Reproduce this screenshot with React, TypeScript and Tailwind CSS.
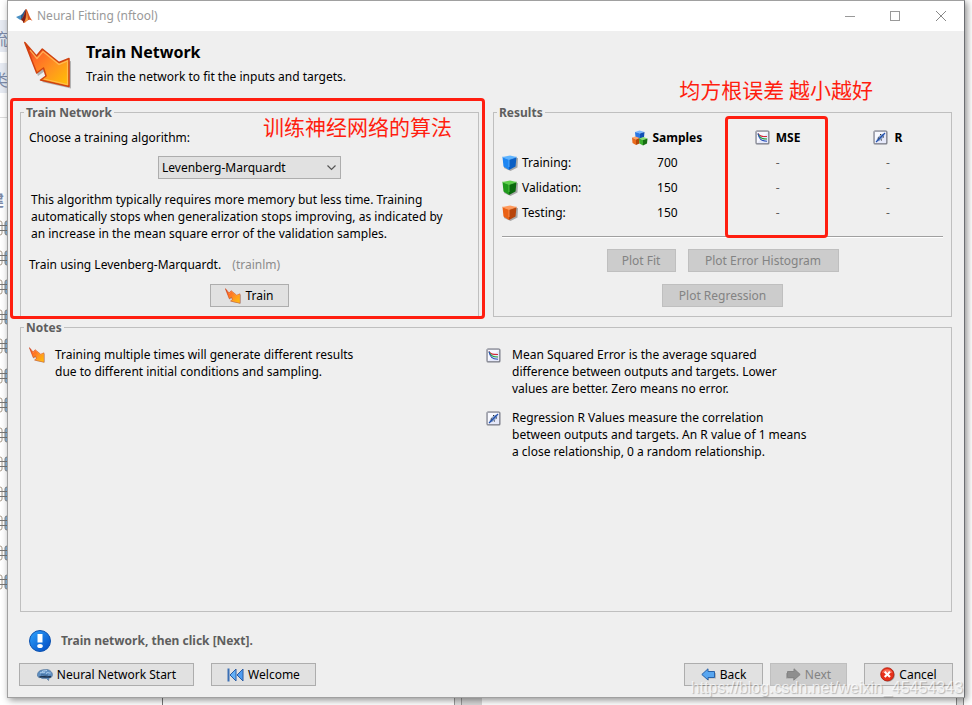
import { useState, type ReactNode } from 'react'

const ALGORITHMS = ['Levenberg-Marquardt', 'Bayesian Regularization', 'Scaled Conjugate Gradient']

const SAMPLES = [
  { id: 'training', label: 'Training:', count: 700, light: '#5fb4ff', mid: '#1e86f2', dark: '#0b5fc4' },
  { id: 'validation', label: 'Validation:', count: 150, light: '#5fd04c', mid: '#1f9a1c', dark: '#0b6a0e' },
  { id: 'testing', label: 'Testing:', count: 150, light: '#ff9a5c', mid: '#ea6216', dark: '#b8450a' },
]

const SIDEBAR_MARKS = [228, 258, 287, 317, 346, 376, 405, 435, 464, 494, 523, 553, 582]

function MatlabIcon() {
  return (
    <svg width="17" height="16" viewBox="0 0 17 16" aria-hidden="true">
      <path d="M0 9 L5 7 L7.500 8.500 L5 12 L3.500 11.500 Z" fill="#4a90c4" />
      <path d="M5 7 C7 6 8 2 10 1 L8.500 8 L5 12 Z" fill="#2d5f91" />
      <path d="M10 1 C11.500 1 13 9 16.500 13 C14.500 11.500 13 11.500 11.500 12.500 C10 13.500 9 15 7.500 15 C7 13 6.500 12 5 12 C8 9 8.500 4 10 1 Z" fill="#d9541e" />
      <path d="M10 1 C9 5 8 9 5 12 C6.500 12 7 13 7.500 15 C9.500 12 10.500 7 10 1 Z" fill="#7c1f1a" />
      <path d="M10.500 3 C11 8 10 12 8 15 C9.500 14 11 12 12 12 C11.500 9 11.500 6 10.500 3 Z" fill="#f5a04a" />
    </svg>
  )
}

function TrainArrow({ size, id }: { size: number; id: string }) {
  return (
    <svg className="shrink-0" width={size} height={size} viewBox="0 0 48 48" aria-hidden="true">
      <defs>
        <linearGradient id={id} x1="0" y1="0" x2="1" y2="1">
          <stop offset="0" stopColor="#d01c10" />
          <stop offset="0.300" stopColor="#ff6a26" />
          <stop offset="0.600" stopColor="#ff9420" />
          <stop offset="1" stopColor="#ffc400" />
        </linearGradient>
      </defs>
      <path d="M3 5 L14 17 L20 10 L36 23 L47 20 L47 47.500 L18 41 L23 37 L21 30 L14 35 Z" fill="#000" opacity="0.250" />
      <path
        d="M0.800 1.500 L12.500 15 L18.300 8 L35 21.500 L45 17.500 L45 45.500 L16.500 39 L22 35 L19.500 27 L12.700 32 Z"
        fill={`url(#${id})`}
        stroke="#cf4210"
        strokeWidth="1.500"
        strokeLinejoin="round"
      />
      <path d="M6 9 L13 17.500 L19 10.500 L35 23.500 L43.500 20 V43.500 L20 38" fill="none" stroke="#ffc060" strokeWidth="1.200" opacity="0.800" />
    </svg>
  )
}

function Cube({ light, mid, dark }: { light: string; mid: string; dark: string }) {
  return (
    <svg className="shrink-0" width="16" height="16" viewBox="0 0 16 16" aria-hidden="true">
      <path d="M2 4 L16 3 L15.500 12.500 L8.500 16 L2 13 Z" fill="#000" opacity="0.300" />
      <path d="M0.500 2 L8 0.500 L14.500 2 L7 4.500 Z" fill={light} />
      <path d="M0.500 2 L7 4.500 V15 L1.500 11.500 Z" fill={mid} />
      <path d="M14.500 2 L7 4.500 V15 L13.500 11.500 Z" fill={dark} />
      <path d="M0.500 2 L7 4.500 L14.500 2 M7 4.500 V12" fill="none" stroke={light} strokeWidth="0.800" />
    </svg>
  )
}

function CubesIcon() {
  return (
    <svg width="16" height="16" viewBox="0 0 16 16" aria-hidden="true">
      <path d="M3 2 L7.500 0.500 L12.500 2 L8 3.500 Z" fill="#7cb8ff" />
      <path d="M3 2 L8 3.500 V9 L3.500 7 Z" fill="#2a78e4" />
      <path d="M12.500 2 L8 3.500 V9 L12 7 Z" fill="#114fb4" />
      <path d="M0 7.500 L3.500 6.500 L7.500 8 L4 9.500 Z" fill="#ffa566" />
      <path d="M0 7.500 L4 9.500 V15 L0.500 13 Z" fill="#ea6a1c" />
      <path d="M7.500 8 L4 9.500 V15 L7.500 13.500 Z" fill="#b34708" />
      <path d="M7 8.500 L11.500 7 L15.500 8.500 L11 10 Z" fill="#8be070" />
      <path d="M7 8.500 L11 10 V15.500 L7.500 13.500 Z" fill="#3aae2c" />
      <path d="M15.500 8.500 L11 10 V15.500 L15 13.500 Z" fill="#176e12" />
    </svg>
  )
}

function PlotFrame() {
  return (
    <>
      <rect x="0.500" y="0.500" width="14" height="14" rx="1.500" fill="#7b7d88" />
      <rect x="0.500" y="0.500" width="13" height="13" rx="1.500" fill="#a4a6b0" />
      <rect x="2" y="2" width="11" height="11" fill="#e6e9fa" />
      <path d="M2 13 V2 H13 Z" fill="#f8f9ff" />
    </>
  )
}

function MseIcon() {
  return (
    <svg className="shrink-0" width="15" height="15" viewBox="0 0 15 15" aria-hidden="true">
      <PlotFrame />
      <path d="M3 3.500 C5 6.500 7 6.500 12 6.500" fill="none" stroke="#d02a3a" strokeWidth="1.100" />
      <path d="M3 4 C5 8 7 9 12 9" fill="none" stroke="#1f9a3a" strokeWidth="1.100" />
      <path d="M3 3.500 C4 9 6 11 12 11.200" fill="none" stroke="#2a50b8" strokeWidth="1.100" />
    </svg>
  )
}

function RegressionIcon() {
  return (
    <svg className="shrink-0" width="15" height="15" viewBox="0 0 15 15" aria-hidden="true">
      <PlotFrame />
      <ellipse cx="7.500" cy="7.500" rx="4.800" ry="2" transform="rotate(-45 7.500 7.500)" fill="#8fa3c4" />
      <path d="M3 12 L12 3" stroke="#1f4fb0" strokeWidth="1.300" />
      <path d="M5 8 h1 M8 10 h1 M7 4.500 h1 M10 7 h1" stroke="#333" strokeWidth="1" />
    </svg>
  )
}

function InfoIcon() {
  return (
    <svg width="22" height="22" viewBox="0 0 22 22" aria-hidden="true">
      <defs>
        <linearGradient id="info" x1="0" y1="0" x2="1" y2="1">
          <stop offset="0" stopColor="#2fa4ff" />
          <stop offset="1" stopColor="#0048c0" />
        </linearGradient>
      </defs>
      <circle cx="11" cy="11" r="10.500" fill="url(#info)" stroke="#0d52b0" strokeWidth="1" />
      <path d="M8.500 4 h5 v8.500 h-5 z" fill="#fff" />
      <ellipse cx="11" cy="16" rx="2.800" ry="2" fill="#fff" />
    </svg>
  )
}

function BrainIcon() {
  return (
    <svg width="16" height="12" viewBox="0 0 16 12" aria-hidden="true">
      <path d="M0.500 7 C0 4 2 1.500 5 1 C8 0 12 0 14 2.500 C16 4.500 16 7 14 8.500 L12 9 L11.500 11.500 L9.500 9.500 C7 9.500 5 10 3.500 8.500 C2 9 1 8 0.500 7 Z" fill="#5f8fc2" stroke="#4a6d94" strokeWidth="0.600" />
      <path d="M3 4 C5 2.500 6 4.500 8 3 M9 4.500 C11 2.500 12 4.500 13.500 4 M5 2.500 C7 1.500 8 2 10 1.500" fill="none" stroke="#b9d6f0" strokeWidth="1" />
      <path d="M2.500 8 C6 7 10 9 14 7.500" fill="none" stroke="#1f3550" strokeWidth="1.600" />
      <path d="M4 6 C6 5 8 7 11 6" fill="none" stroke="#2f5580" strokeWidth="0.800" />
    </svg>
  )
}

function RewindIcon() {
  return (
    <svg width="17" height="14" viewBox="0 0 17 14" aria-hidden="true">
      <path d="M1.500 0.500 V13.500" stroke="#3a6fb4" strokeWidth="2" />
      <path d="M9 1 V13 L3 7 Z" fill="#63b0f6" stroke="#2a5ca4" strokeLinejoin="round" />
      <path d="M16 1 V13 L10 7 Z" fill="#4f9cf0" stroke="#2a5ca4" strokeLinejoin="round" />
    </svg>
  )
}

function BlockArrow({ flip, fill, stroke }: { flip?: boolean; fill: string; stroke: string }) {
  return (
    <svg className={flip ? '-scale-x-100' : ''} width="15" height="13" viewBox="0 0 15 13" aria-hidden="true">
      <path d="M2 7.500 L8 13 V10.500 H15 V5 Z" fill="#000" opacity="0.200" />
      <path d="M0.800 6.500 L7 0.800 V3.500 H13.500 V9.500 H7 V12 Z" fill={fill} stroke={stroke} strokeLinejoin="round" />
    </svg>
  )
}

function CancelIcon() {
  return (
    <svg width="15" height="15" viewBox="0 0 15 15" aria-hidden="true">
      <circle cx="8" cy="8" r="6.800" fill="#000" opacity="0.300" />
      <circle cx="7.300" cy="7.300" r="6.600" fill="#e8301a" stroke="#b01c0c" strokeWidth="0.800" />
      <path d="M2 6 A5.600 5.600 0 0 1 12.500 6 C9 4.500 5 5 2 6 Z" fill="#ff8c78" opacity="0.700" />
      <path d="M4.700 4.700 L10 10 M10 4.700 L4.700 10" stroke="#fff" strokeWidth="2.200" />
    </svg>
  )
}

function PushButton({ children, className = '', disabled }: { children: ReactNode; className?: string; disabled?: boolean }) {
  return (
    <button
      type="button"
      disabled={disabled}
      className={`flex h-[23px] items-center justify-center gap-1 border border-[#adadad] bg-[#e1e1e1] whitespace-nowrap disabled:border-[#bfbfbf] disabled:bg-[#cccccc] disabled:text-[#838383] ${className}`}
    >
      {children}
    </button>
  )
}

// slice of the page that stays visible behind the dialog
function Backdrop() {
  return (
    <div aria-hidden="true" className="absolute inset-0 overflow-hidden text-[#7d8aa8]">
      <div className="absolute top-5 left-0 h-8 w-2 bg-[#e6eaf2]" />
      <div className="absolute top-[63px] left-0 h-[30px] w-2 bg-[#e6eaf2]" />
      <div className="absolute top-[117px] left-0 h-px w-2 bg-[#dddddd]" />
      <span className="absolute top-[27px] -left-2 text-base">流</span>
      <span className="absolute top-[68px] -left-2 text-base">类</span>
      <span className="absolute top-[188px] -left-3 text-base font-bold">建</span>
      {SIDEBAR_MARKS.map((y) => (
        <svg key={y} className="absolute -left-1" style={{ top: y - 8 }} width="16" height="16" viewBox="0 0 16 16">
          <rect x="9" y="1" width="7" height="14" rx="2" fill="#8bb8e0" stroke="#888" />
          <path d="M0 1 H4 Q6 1 6 3 V13 Q6 15 4 15 H0" fill="none" stroke="#a89a88" />
          <path d="M4 5.500 H12 M4 10.500 H12" stroke="#777" />
        </svg>
      ))}
      <div className="absolute bottom-0 left-[162px] h-2 w-px bg-[#777777]" />
      <div className="absolute bottom-0 left-[454px] h-2 w-2 border-x border-[#999999] bg-[#e0e0e0]" />
      <div className="absolute bottom-0 left-[462px] h-2 w-5 bg-[#d8d8d8]" />
      <div className="absolute right-2 bottom-0 h-2 w-2 border-x border-[#888888] bg-[#e0e0e0]" />
    </div>
  )
}

export default function App() {
  const [algorithm, setAlgorithm] = useState(ALGORITHMS[0])

  return (
    <div className="relative flex min-h-screen flex-col bg-white px-[7px] pb-[7px] font-['Noto_Sans','Noto_Sans_CJK_SC',sans-serif] text-[12px] leading-[17px] text-black">
      <Backdrop />
      <div className="relative flex flex-1 flex-col border border-[#a0a0a0] border-r-[#6c6e72] bg-[#efefef] shadow-[2px_2px_7px_rgba(0,0,0,0.45)]">
        <header className="flex h-[30px] items-center bg-white pb-px pl-2 text-[#999999]">
          <MatlabIcon />
          <span className="ml-1">Neural Fitting (nftool)</span>
          <div className="ml-auto flex">
            <button type="button" aria-label="Minimize" className="flex w-[45px] justify-center">
              <svg width="10" height="10" viewBox="0 0 10 10"><path d="M0 5.500 H10" stroke="#999" /></svg>
            </button>
            <button type="button" aria-label="Maximize" className="flex w-[45px] justify-center">
              <svg width="10" height="10" viewBox="0 0 10 10"><rect x="0.500" y="0.500" width="9" height="9" fill="none" stroke="#999" /></svg>
            </button>
            <button type="button" aria-label="Close" className="flex w-[47px] justify-center">
              <svg width="10" height="10" viewBox="0 0 10 10"><path d="M0 0 L10 10 M10 0 L0 10" stroke="#888" /></svg>
            </button>
          </div>
        </header>

        <div className="flex h-[73px] gap-[14px] pt-[10px] pl-4">
          <TrainArrow size={48} id="arrow-large" />
          <div>
            <h1 className="text-[16px] leading-[22px] font-bold">Train Network</h1>
            <p className="mt-[5px]">Train the network to fit the inputs and targets.</p>
          </div>
        </div>

        <main className="flex flex-1 flex-col px-3">
          <div className="grid grid-cols-2 gap-[14px]">
            <div className="relative flex">
              <fieldset className="w-full min-w-0 border border-[#bfbfbf] px-2 pb-[9px]">
                <legend className="-ml-[5px] px-[2px] font-bold text-[#5e5e5e]">Train Network</legend>
                <label htmlFor="algorithm" className="mt-2 block">Choose a training algorithm:</label>
                <div className="relative mx-auto mt-[10px] w-[183px]">
                  <select
                    id="algorithm"
                    value={algorithm}
                    onChange={(e) => setAlgorithm(e.target.value)}
                    className="block h-[23px] w-full appearance-none border border-[#adadad] bg-[#e1e1e1] pl-[3px]"
                  >
                    {ALGORITHMS.map((a) => (
                      <option key={a}>{a}</option>
                    ))}
                  </select>
                  <svg className="pointer-events-none absolute top-[9px] right-[5px]" width="9" height="6" viewBox="0 0 9 6" aria-hidden="true">
                    <path d="M0.500 0.500 L4.500 4.500 L8.500 0.500" fill="none" stroke="#555" strokeWidth="1.200" />
                  </svg>
                </div>
                <p className="mt-3 ml-[2px]">
                  This algorithm typically requires more memory but less time. Training
                  <br />
                  automatically stops when generalization stops improving, as indicated by
                  <br />
                  an increase in the mean square error of the validation samples.
                </p>
                <p className="mt-[14px]">
                  Train using {algorithm}. <span className="ml-2 text-[#8c8c8c]">(trainlm)</span>
                </p>
                <PushButton className="mx-auto mt-[11px] w-[79px]">
                  <TrainArrow size={16} id="arrow-button" />
                  Train
                </PushButton>
              </fieldset>
              <div className="pointer-events-none absolute -top-[6px] -right-[6px] -bottom-[2px] -left-[10px] rounded-[4px] border-[3px] border-[#ff1e10]" />
              <span className="absolute top-[7px] right-[27px] font-['Noto_Sans_CJK_SC',sans-serif] text-[21px] leading-[30px] text-[#ff1e10]">
                训练神经网络的算法
              </span>
            </div>

            <div className="relative flex">
              <fieldset className="w-full min-w-0 border border-[#bfbfbf] px-2 pb-[9px]">
                <legend className="-ml-[5px] px-[2px] font-bold text-[#5e5e5e]">Results</legend>
                <table className="mt-1 w-full table-fixed text-center">
                  <thead>
                    <tr className="h-[25px]">
                      <td />
                      <th scope="col">
                        <span className="flex items-center justify-center gap-1"><CubesIcon />Samples</span>
                      </th>
                      <th scope="col" className="relative">
                        <span className="flex items-center justify-center gap-[6px]"><MseIcon />MSE</span>
                        <span className="pointer-events-none absolute -top-[9px] left-[2px] h-[122px] w-[103px] rounded-[4px] border-[3px] border-[#ff1e10]" />
                      </th>
                      <th scope="col">
                        <span className="flex items-center justify-center gap-[6px]"><RegressionIcon />R</span>
                      </th>
                    </tr>
                  </thead>
                  <tbody>
                    {SAMPLES.map((s) => (
                      <tr key={s.id} className="h-[25px]">
                        <th scope="row" className="font-normal">
                          <span className="flex items-center gap-1"><Cube light={s.light} mid={s.mid} dark={s.dark} />{s.label}</span>
                        </th>
                        <td>{s.count}</td>
                        <td className="text-[#5e5e5e]">-</td>
                        <td className="text-[#5e5e5e]">-</td>
                      </tr>
                    ))}
                  </tbody>
                </table>
                <div className="mt-[11px] h-[2px] border-t border-[#a0a0a0] bg-white" />
                <div className="mx-auto mt-[11px] flex max-w-[300px] flex-wrap justify-center gap-3">
                  <PushButton disabled className="w-[69px]">Plot Fit</PushButton>
                  <PushButton disabled className="w-[151px]">Plot Error Histogram</PushButton>
                  <PushButton disabled className="w-[121px]">Plot Regression</PushButton>
                </div>
              </fieldset>
              <span className="absolute -top-[30px] right-[79px] font-['Noto_Sans_CJK_SC',sans-serif] text-[21px] leading-[30px] text-[#ff1e10]">
                均方根误差 越小越好
              </span>
            </div>
          </div>

          <fieldset className="mt-[2px] flex-1 border border-[#bfbfbf] px-2">
            <legend className="-ml-[5px] px-[2px] font-bold text-[#5e5e5e]">Notes</legend>
            <div className="mt-[10px] grid grid-cols-2">
              <div className="flex items-start gap-[10px]">
                <span className="mt-px"><TrainArrow size={16} id="arrow-note" /></span>
                <p>
                  Training multiple times will generate different results
                  <br />
                  due to different initial conditions and sampling.
                </p>
              </div>
              <div className="flex flex-col gap-3">
                <div className="flex items-start gap-[11px]">
                  <span className="mt-[2px]"><MseIcon /></span>
                  <p>
                    Mean Squared Error is the average squared
                    <br />
                    difference between outputs and targets. Lower
                    <br />
                    values are better. Zero means no error.
                  </p>
                </div>
                <div className="flex items-start gap-[11px]">
                  <span className="mt-[2px]"><RegressionIcon /></span>
                  <p>
                    Regression R Values measure the correlation
                    <br />
                    between outputs and targets. An R value of 1 means
                    <br />
                    a close relationship, 0 a random relationship.
                  </p>
                </div>
              </div>
            </div>
          </fieldset>
        </main>

        <footer className="px-[11px] pt-[17px] pb-[11px]">
          <p className="flex h-[23px] items-center gap-[10px] pl-[10px] font-bold text-[#5e5e5e]">
            <InfoIcon />
            Train network, then click [Next].
          </p>
          <div className="mt-[11px] flex">
            <PushButton className="w-[175px]"><BrainIcon />Neural Network Start</PushButton>
            <PushButton className="ml-[17px] w-[105px]"><RewindIcon />Welcome</PushButton>
            <PushButton className="ml-auto w-[79px]"><BlockArrow fill="#58a6f0" stroke="#2a62a8" />Back</PushButton>
            <PushButton disabled className="ml-[7px] w-[77px]"><BlockArrow flip fill="#8e8e8e" stroke="#848484" />Next</PushButton>
            <PushButton className="ml-[17px] w-[89px]"><CancelIcon />Cancel</PushButton>
          </div>
        </footer>
      </div>
      <span className="pointer-events-none absolute right-[9px] bottom-[7px] font-['Liberation_Sans',sans-serif] text-[16px] leading-[20px] text-white/70 [text-shadow:1px_1px_1px_rgba(0,0,0,0.25)]">
        https://blog.csdn.net/weixin_45454343
      </span>
    </div>
  )
}
